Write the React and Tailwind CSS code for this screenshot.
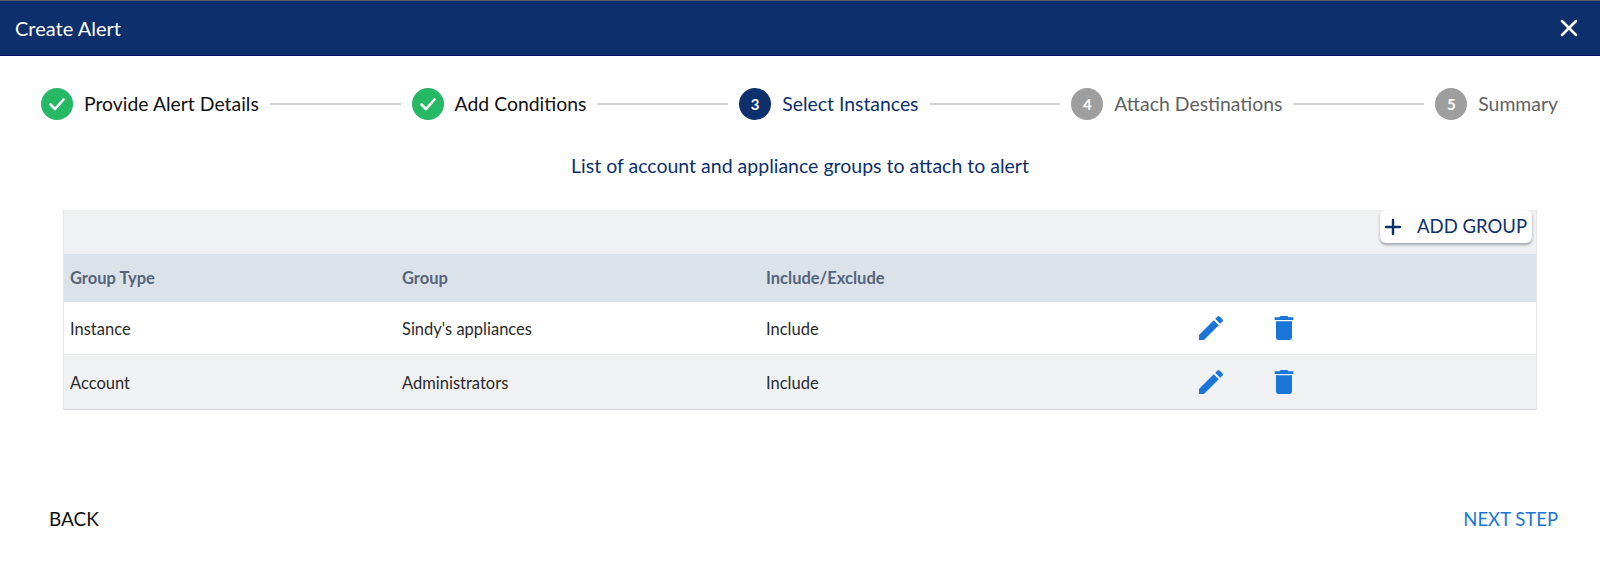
import React from "react";
import { X, Plus } from "lucide-react";

const font = { fontFamily: "Lato, 'Noto Sans', sans-serif" };

function Check() {
  return (
    <svg width="20" height="20" viewBox="0 0 20 20" fill="none" stroke="white" strokeWidth="2.6" strokeLinecap="round" strokeLinejoin="round">
      <path d="M3.5 10.5 8 15l8.5-9.5" />
    </svg>
  );
}

function Step({ state, n, label }) {
  const circle =
    state === "done" ? "bg-[#25b865]" : state === "active" ? "bg-[#0d2f6c]" : "bg-[#9e9e9e]";
  const text =
    state === "done" ? "text-[#111111]" : state === "active" ? "text-[#0d2f6c]" : "text-[#616161]";
  return (
    <div className="flex items-center gap-[11px] shrink-0">
      <div className={`w-8 h-8 rounded-full flex items-center justify-center text-white text-[15px] font-bold ${circle}`}>
        {state === "done" ? <Check /> : n}
      </div>
      <span className={`text-[19.4px] leading-6 ${text}`}>{label}</span>
    </div>
  );
}

function Line() {
  return <div className="flex-1 h-[2px] bg-[#d2d2d2] mx-[11px]" />;
}

function EditIcon() {
  return (
    <svg width="32" height="32" viewBox="0 0 24 24" fill="#1976d8">
      <path d="M3 17.25V21h3.75L17.81 9.94l-3.75-3.75L3 17.25zM20.71 7.04c.39-.39.39-1.02 0-1.41l-2.34-2.34a.9959.9959 0 0 0-1.41 0l-1.83 1.83 3.75 3.75 1.83-1.83z" />
    </svg>
  );
}

function TrashIcon() {
  return (
    <svg width="32" height="32" viewBox="0 0 24 24" fill="#1976d8">
      <path d="M6 19c0 1.1.9 2 2 2h8c1.1 0 2-.9 2-2V7H6v12zM19 4h-3.5l-1-1h-5l-1 1H5v2h14V4z" />
    </svg>
  );
}

const rows = [
  { type: "Instance", group: "Sindy's appliances", mode: "Include", cls: "bg-white h-[53px] border-b border-[#e8e9eb]" },
  { type: "Account", group: "Administrators", mode: "Include", cls: "bg-[#f0f1f3] h-[55px] border-b border-[#cfd1d4]" },
];

const cols = "grid grid-cols-[332px_364px_429px_73px_1fr] items-center";

export default function App() {
  return (
    <div className="w-[1600px] h-[570px] bg-white flex flex-col overflow-hidden" style={font}>
      <header className="h-[56px] shrink-0 bg-[#0d2f6c] border-t border-t-[#5a5f68] border-b border-b-[#00146a] flex items-center justify-between pl-[15px] pr-[17px]">
        <h1 className="text-white text-[20px] leading-6 font-normal">Create Alert</h1>
        <X className="text-white w-[28px] h-[28px]" strokeWidth={2.2} />
      </header>

      <div className="flex items-center pl-[41px] pr-[42px] mt-[32px] h-8">
        <Step state="done" label="Provide Alert Details" />
        <Line />
        <Step state="done" label="Add Conditions" />
        <Line />
        <Step state="active" n="3" label="Select Instances" />
        <Line />
        <Step state="todo" n="4" label="Attach Destinations" />
        <Line />
        <Step state="todo" n="5" label="Summary" />
      </div>

      <p className="text-center text-[19.5px] leading-6 text-[#0d2f6c] mt-[34px]">
        List of account and appliance groups to attach to alert
      </p>

      <section className="mx-[63px] mt-[32px] border-l border-r border-[#e4e6e9]">
        <div className="h-[44px] bg-[#f0f1f3] flex items-start justify-end pr-[4px]">
          <button className="h-[33px] w-[152px] bg-white rounded-md shadow-[0_2px_3px_rgba(60,70,90,0.45)] flex items-center text-[#0d2f6c] text-[18.5px] pl-[1px] pr-[5px] justify-between">
            <Plus className="w-[24px] h-[24px]" strokeWidth={2.4} />
            <span>ADD GROUP</span>
          </button>
        </div>
        <div className={`${cols} h-[48px] bg-[#dbe2ea] pl-[6px] text-[16.5px] font-bold text-[#56657a]`}>
          <span>Group Type</span>
          <span>Group</span>
          <span>Include/Exclude</span>
        </div>
        {rows.map((r) => (
          <div key={r.type} className={`${cols} ${r.cls} pl-[6px] text-[16.5px] text-[#2b2b2b]`}>
            <span className="pt-[2px]">{r.type}</span>
            <span className="pt-[2px]">{r.group}</span>
            <span className="pt-[2px]">{r.mode}</span>
            <EditIcon />
            <TrashIcon />
          </div>
        ))}
      </section>

      <footer className="mt-auto flex items-center justify-between pl-[49px] pr-[42px] pb-[39px] leading-6">
        <span className="text-[#111111] text-[19px]">BACK</span>
        <span className="text-[#1976d8] text-[18.5px]">NEXT STEP</span>
      </footer>
    </div>
  );
}
